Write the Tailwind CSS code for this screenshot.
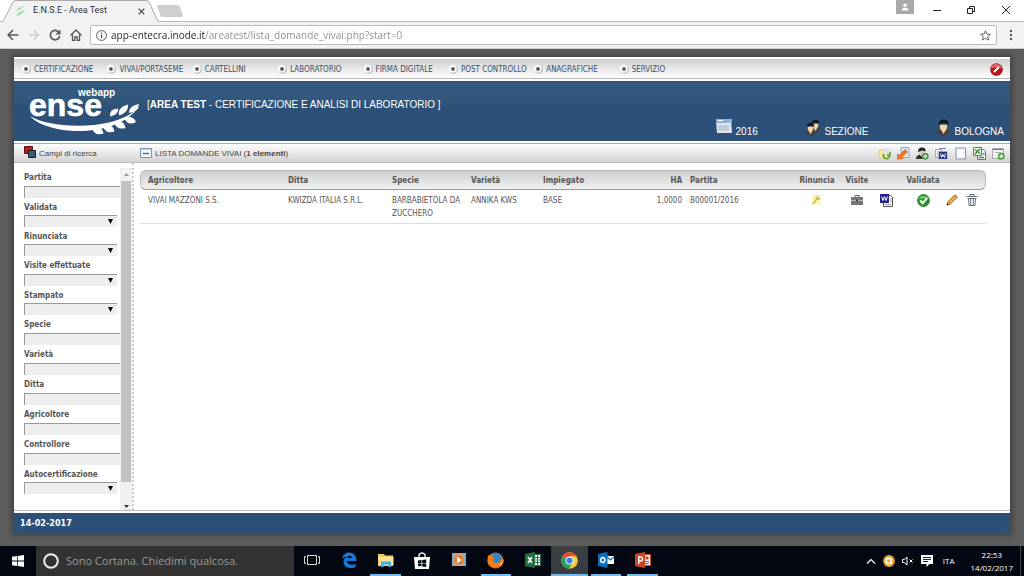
<!DOCTYPE html>
<html lang="it">
<head>
<meta charset="utf-8">
<title>E.N.S.E - Area Test</title>
<script src="https://cdn.jsdelivr.net/npm/@tailwindcss/browser@4"></script>
</head>
<body class="flex h-screen flex-col overflow-hidden bg-[#5c5c5c] font-['DejaVu_Sans_Condensed','DejaVu_Sans',sans-serif] text-[8px] text-[#555]">

<!-- Shared symbols -->
<svg class="hidden" aria-hidden="true">
  <symbol id="word" viewBox="0 0 13 13"><path d="M3.500 1.500h7l2 2v9h-9z" fill="#fff" stroke="#555"/><path d="M10 5h2M10 7h2M5 10.500h6" stroke="#99a"/><path d="M0 0h9v9H0z" fill="#23238c"/><path d="M1.500 2.500l1.500 4 1.500-4 1.500 4 1.500-4" fill="none" stroke="#fff"/></symbol>
  <symbol id="man" viewBox="0 0 15 18"><path d="M1 15c0-4 3-5 6.500-5s6.500 1 6.500 5c-2 3.500-11 3.500-13 0z" fill="#45413e"/><path d="M5 11l2.500 5 2.500-5z" fill="#ddd8cc"/><path d="M3.500 6Q3.500 13 7.500 13t4-7z" fill="#f3d3aa"/><path d="M2.500 7C2 2 5 .5 8 .5S13 2 12.500 7L11 5Q7 3 4 5.500z" fill="#17181a"/></symbol>
  <symbol id="bullet" viewBox="0 0 12 12"><circle cx="6.500" cy="6.500" r="5.200" fill="#b5b5b5"/><circle cx="5.700" cy="5.700" r="4.900" fill="#fafafa"/><rect x="4" y="4" width="4" height="4" rx="1" fill="#555"/></symbol>
</svg>

<!-- Browser tabs -->
<header class="flex h-[22px] shrink-0 items-end justify-between border-b border-[#b8b8b8] bg-white">
  <div class="flex items-end">
    <div class="relative -mb-px h-[22px] w-[158px]">
      <svg class="absolute inset-0 h-full w-full" viewBox="0 0 158 22" preserveAspectRatio="none" aria-hidden="true"><path d="M3 22L13 2Q14 .5 16 .5H146Q148 .5 149 2L158 22z" fill="#f2f2f2"/><path d="M3 21.500L13 2Q14 .5 16 .5H146Q148 .5 149 2L158 21.500" fill="none" stroke="#aaa"/></svg>
      <div class="relative flex h-full items-center pr-3 pl-4">
        <svg class="h-3 w-2.5" viewBox="0 0 10 12" aria-hidden="true"><path d="M0 6Q2 2 8 1Q5 5 0 6M0 11Q3 6 9 5Q6 10 0 11" fill="#a5dcae"/></svg>
        <span class="ml-[7px] flex-1 font-['Roboto','Open_Sans',sans-serif] text-[9px] text-[#333]">E.N.S.E - Area Test</span>
        <button aria-label="Chiudi scheda" class="p-px"><svg class="h-[7px] w-[7px]" viewBox="0 0 7 7"><path d="M.7.7l5.600 5.600M6.300.7L.7 6.300" stroke="#444" stroke-width="1.200"/></svg></button>
      </div>
    </div>
    <button aria-label="Nuova scheda" class="mb-1 -ml-px"><svg class="h-3 w-[26px]" viewBox="0 0 26 12"><path d="M0 1Q0 0 1 0H20Q22 0 22.500 1L26 10Q26 12 24 12H6Q4 12 3.500 11z" fill="#cfcfcf"/></svg></button>
  </div>
  <div class="flex h-full items-start">
    <button aria-label="Profilo" class="grid h-3.5 w-[18px] place-items-center bg-[#a9a9a9]"><svg class="h-2 w-2" viewBox="0 0 8 8" fill="#fff"><circle cx="4" cy="2.300" r="1.800"/><path d="M.5 7.500Q.5 4.800 4 4.800T7.500 7.500z"/></svg></button>
    <button aria-label="Riduci" class="grid h-5 w-[45px] place-items-center"><svg class="h-2 w-2" viewBox="0 0 8 8"><path d="M0 4.500h8" stroke="#222"/></svg></button>
    <button aria-label="Ripristina" class="grid h-5 w-6 place-items-center"><svg class="h-2 w-2" viewBox="0 0 8 8" fill="none" stroke="#222"><path d="M.5 2.500h5v5h-5zM2.500 2V.5h5v5H6"/></svg></button>
    <button aria-label="Chiudi" class="grid h-5 w-[41px] place-items-center pl-1"><svg class="h-2 w-2" viewBox="0 0 8 8"><path d="M0 0l8 8M8 0L0 8" stroke="#222"/></svg></button>
  </div>
</header>

<!-- Address bar -->
<div class="flex h-[27px] shrink-0 items-center border-b border-[#ccc] bg-[#f2f2f2] px-[7px]">
  <div class="flex gap-2">
    <button aria-label="Indietro"><svg class="h-3 w-3" viewBox="0 0 12 12" fill="none" stroke="#555" stroke-width="1.500"><path d="M11.500 6H1M6 1L1 6l5 5"/></svg></button>
    <button aria-label="Avanti"><svg class="ml-px h-3 w-3" viewBox="0 0 12 12" fill="none" stroke="#ccc" stroke-width="1.300"><path d="M1 6h9.500M6 1.500L10.500 6 6 10.500"/></svg></button>
    <button aria-label="Ricarica"><svg class="ml-px h-3 w-3" viewBox="0 0 12 12"><path d="M10 3.500A4.700 4.700 0 1 0 10.700 7" fill="none" stroke="#555" stroke-width="1.600"/><path d="M11.500.5v5h-5z" fill="#555"/></svg></button>
    <button aria-label="Pagina iniziale"><svg class="ml-px h-3 w-3" viewBox="0 0 12 12" fill="none" stroke="#555" stroke-width="1.300"><path d="M.5 6.500L6 1l5.500 5.500M2.500 5.500v6h2.300v-3.500h2.400v3.500h2.300v-6"/></svg></button>
  </div>
  <div class="ml-2 flex h-5 flex-1 items-center rounded-xs border border-[#bbb] bg-white px-[5px]">
    <svg class="h-[11px] w-[11px]" viewBox="0 0 11 11" aria-hidden="true"><circle cx="5.500" cy="5.500" r="4.900" fill="none" stroke="#555"/><path d="M5.500 4.700v3.500M5.500 2.500v1.300" stroke="#444" stroke-width="1.200"/></svg>
    <input aria-label="Indirizzo" value="app-entecra.inode.it/areatest/lista_domande_vivai.php?start=0" class="ml-1 min-w-0 flex-1 bg-[linear-gradient(to_right,#222_94px,#8a8a8a_94px)] bg-clip-text font-['Open_Sans',sans-serif] text-[10px] leading-[14px] text-transparent outline-none">
    <button aria-label="Preferiti"><svg class="h-[11px] w-[11px]" viewBox="0 0 12 12"><path d="M6 .8l1.500 3.600 3.900.3-3 2.500 1 3.800L6 8.900 2.600 11l1-3.800-3-2.500 3.900-.3z" fill="none" stroke="#555"/></svg></button>
  </div>
  <button aria-label="Menu" class="ml-3 w-2"><svg class="h-3 w-1" viewBox="0 0 4 12" fill="#555"><circle cx="2" cy="2" r="1.200"/><circle cx="2" cy="6" r="1.200"/><circle cx="2" cy="10" r="1.200"/></svg></button>
</div>

<!-- Web application -->
<div class="flex min-h-0 flex-1 flex-col px-3.5 pt-2 pb-[13px]">
<div class="flex min-h-0 flex-1 flex-col bg-white shadow-[0_0_5px_2px_#404040]">
  <nav class="mt-0.5 flex h-5 shrink-0 items-center justify-between border-b border-[#b5b5b5] bg-linear-to-b from-[#cfcfcf] to-white px-[7px] pt-px">
    <ul class="grid w-[683px] grid-cols-8 text-[#3d4f68]">
      <li><a href="#" class="flex items-center gap-[3px] whitespace-nowrap"><svg class="h-2.5 w-2.5"><use href="#bullet"/></svg><span class="pt-0.5">CERTIFICAZIONE</span></a></li>
      <li><a href="#" class="flex items-center gap-[3px] whitespace-nowrap"><svg class="h-2.5 w-2.5"><use href="#bullet"/></svg><span class="pt-0.5">VIVAI/PORTASEME</span></a></li>
      <li><a href="#" class="flex items-center gap-[3px] whitespace-nowrap"><svg class="h-2.5 w-2.5"><use href="#bullet"/></svg><span class="pt-0.5">CARTELLINI</span></a></li>
      <li><a href="#" class="flex items-center gap-[3px] whitespace-nowrap"><svg class="h-2.5 w-2.5"><use href="#bullet"/></svg><span class="pt-0.5">LABORATORIO</span></a></li>
      <li><a href="#" class="flex items-center gap-[3px] whitespace-nowrap"><svg class="h-2.5 w-2.5"><use href="#bullet"/></svg><span class="pt-0.5">FIRMA DIGITALE</span></a></li>
      <li><a href="#" class="flex items-center gap-[3px] whitespace-nowrap"><svg class="h-2.5 w-2.5"><use href="#bullet"/></svg><span class="pt-0.5">POST CONTROLLO</span></a></li>
      <li><a href="#" class="flex items-center gap-[3px] whitespace-nowrap"><svg class="h-2.5 w-2.5"><use href="#bullet"/></svg><span class="pt-0.5">ANAGRAFICHE</span></a></li>
      <li><a href="#" class="flex items-center gap-[3px] whitespace-nowrap"><svg class="h-2.5 w-2.5"><use href="#bullet"/></svg><span class="pt-0.5">SERVIZIO</span></a></li>
    </ul>
    <button aria-label="Esci"><svg class="h-[13px] w-[13px]" viewBox="0 0 13 13"><circle cx="6.500" cy="6.500" r="6.300" fill="#b81219"/><path d="M1 5.500a5.600 5.600 0 0 1 11 0Q6.500 3 1 5.500" fill="#e06a6c"/><path d="M4 9l5-5" stroke="#fff" stroke-width="2.200"/></svg></button>
  </nav>

  <div class="mt-0.5 flex h-[60px] shrink-0 justify-between bg-linear-to-b from-[#33587e] from-30% to-[#2c5077] to-45% pr-1.5 pl-3.5 font-['Liberation_Sans',sans-serif] text-[10px] text-white">
    <div class="flex">
      <svg class="mt-1 h-[52px] w-28" viewBox="0 0 112 52" fill="#fff" role="img" aria-label="ense webapp">
        <text x="50" y="11" font-size="10" font-weight="700">webapp</text>
        <text x="1" y="31" font-size="32" font-weight="700" stroke="#fff" stroke-width=".6">ense</text>
        <path d="M2 31C20 43 82 47 108 25C86 53 20 51 2 31z"/>
        <path d="M82 31.500q-1-7.500 8-8q1 6-8 8M91 30.500q-2-8 9-11q1 8-9 11M101 28q0-7.500 10-9q0 8-10 9"/>
        <path d="M64 43q10-3 11.500 5.500q-9 3-11.500-5.500M75 41q10-3 11.500 5.500q-9 3-11.500-5.500M86 37q10-3 11.500 6q-9 2.500-11.500-6M96 33q9-3 12 4q-8 4.500-12-4"/>
      </svg>
      <h1 class="mt-[18px] ml-[7px] leading-3">[<b>AREA TEST</b> - CERTIFICAZIONE E ANALISI DI LABORATORIO ]</h1>
    </div>
    <ul class="flex items-end pb-[3px]">
      <li><a href="#" class="flex w-[89px] items-end gap-1 leading-3"><svg class="mb-1 h-[15px] w-4" viewBox="0 0 16 15"><path d="M0 1h15l1 13H1z" fill="#dce4ec"/><path d="M0 0h16v4H0z" fill="#8fb4d6"/><path d="M2 1.500h5" stroke="#fff"/><path d="M2 6h11v6H2z" fill="#c5ced8"/></svg>2016</a></li>
      <li><a href="#" class="flex w-[131px] items-end gap-1 leading-3"><svg class="mb-0.5 h-[17px] w-4" viewBox="0 0 16 17"><use href="#man" x="5" y="0" width="11" height="14"/><use href="#man" x="0" y="3" width="11" height="14"/></svg>SEZIONE</a></li>
      <li><a href="#" class="flex items-end gap-1 leading-3"><svg class="mb-0.5 h-[17px] w-[15px]"><use href="#man"/></svg>BOLOGNA</a></li>
    </ul>
  </div>

  <div class="mt-0.5 flex h-5 shrink-0 items-center border-y border-t-[#aaa] border-b-[#bbb] bg-linear-to-b from-white to-[#d2d2d2] pr-[5px] pl-2.5 text-[#444]">
    <div class="flex w-[116px] items-center gap-[3px]">
      <svg class="mb-0.5 h-3 w-3" viewBox="0 0 12 12" aria-hidden="true"><path d="M.5.5h8v7h-8z" fill="#b81922" stroke="#611"/><path d="M4.500 4.500h7v7h-7z" fill="#3c5a80" stroke="#122"/></svg>
      <h2 class="pt-0.5 font-['Liberation_Sans',sans-serif] leading-3">Campi di ricerca</h2>
    </div>
    <div class="flex flex-1 items-center gap-[3px]">
      <svg class="h-3 w-3" viewBox="0 0 12 12" aria-hidden="true"><path d="M.5 1.500h11v9H.5z" fill="#f4f9fc" stroke="#7896b0"/><path d="M1 2.500h10" stroke="#b9d2e4"/><path d="M3 6.500h6" stroke="#456f95" stroke-width="1.400"/></svg>
      <h2 class="pt-0.5 font-['Liberation_Sans',sans-serif] leading-3">LISTA DOMANDE VIVAI (<b>1 elementi</b>)</h2>
    </div>
    <div class="flex gap-[6px]">
      <button aria-label="Aggiorna cartella"><svg class="h-[13px] w-[13px]" viewBox="0 0 13 13"><path d="M1 3h4l1 1h3v7H1z" fill="#fae9a5" stroke="#e3cd85"/><path d="M5 2l4-1 3 2v3H6z" fill="#d8e5f0"/><path d="M6 7a3 3 0 1 0 5 0M12 5v3H9" fill="none" stroke="#5c9d2c" stroke-width="1.600"/></svg></button>
      <button aria-label="Importa"><svg class="h-[13px] w-[13px]" viewBox="0 0 13 13"><path d="M4 .5h8v10H4z" fill="#d7e5f2" stroke="#93aac2"/><path d="M0 6l2 2 6-6 3 3-6 5 2 2-7 .5z" fill="#ec7420"/></svg></button>
      <button aria-label="Aggiungi utente"><svg class="h-[13px] w-[13px]" viewBox="0 0 13 13"><path d="M0 12Q0 7.500 5 7.500t5 4.500z" fill="#333"/><path d="M3 4Q3 9 5.700 9T8.500 4z" fill="#e9c9a5"/><path d="M2 5Q2 .5 6 .5t3.500 4L6 3.500z" fill="#222"/><circle cx="9.300" cy="9.300" r="3.500" fill="#56995a"/><path d="M7.500 9.300h3.600M9.300 7.500v3.600" stroke="#fff"/></svg></button>
      <button aria-label="Esporta Word"><svg class="h-[13px] w-[13px]" viewBox="0 0 13 13"><path d="M.5 2.500h6v8h-6zM3 4.500h9v7H3z" fill="#eef2f8" stroke="#9dabc0"/><path d="M4 1.500h7" stroke="#789"/><path d="M4 5h8v7H4z" fill="#23357f"/><path d="M5.500 6.500l1 4 1.500-3 1.500 3 1-4" fill="none" stroke="#fff"/></svg></button>
      <button aria-label="Documento"><svg class="h-[13px] w-[13px]" viewBox="0 0 13 13"><path d="M2 1h9.500v11H2z" fill="#eef4fb" stroke="#8295aa"/><path d="M3.500 2.500h6v7h-6z" fill="#fff"/></svg></button>
      <button aria-label="Esporta Excel"><svg class="h-[13px] w-[13px]" viewBox="0 0 13 13"><path d="M4.500 2.500h6l2 2v8h-8z" fill="#f8fbff" stroke="#4b6fb0"/><path d="M.5.500h8v8h-8z" fill="#e6f4df" stroke="#3f9442"/><path d="M2 2.500l5 4M7 2L2 7M6 10.500h5M9.500 7h2" stroke="#3b8b3e" stroke-width="1.300"/></svg></button>
      <button aria-label="Aggiungi modulo"><svg class="h-[13px] w-[13px]" viewBox="0 0 13 13"><path d="M.5 1.500h11v10H.5z" fill="#f5f5f5" stroke="#a4aaae"/><path d="M1 2.500h10" stroke="#6d7880"/><path d="M3 5.500h6" stroke="#aaa"/><circle cx="9.300" cy="9.300" r="3.500" fill="#4fa33b"/><path d="M7.300 9.300h4M9.300 7.300v4" stroke="#fff" stroke-width="1.200"/></svg></button>
    </div>
  </div>

  <div class="flex min-h-0 flex-1 border-b border-[#bbb]">
    <aside class="flex w-[120px] shrink-0 border-r-2 border-dotted border-[#ccc] pt-[5px]">
      <form class="min-w-0 flex-1 overflow-hidden pl-2.5 font-bold">
        <div class="flex h-[30px] flex-col"><label for="f1" class="h-[18px] leading-5">Partita</label><input id="f1" class="h-3 w-[120px] border-t border-l border-[#999] bg-[#eee]"></div>
        <div class="flex h-[29px] flex-col"><label for="f2" class="h-[17px] leading-5">Validata</label><span class="relative flex h-3"><select id="f2" class="h-3 w-[93px] appearance-none border-t border-l border-[#999] bg-[#eee]"><option></option></select><svg class="pointer-events-none absolute top-1 left-[84px] h-[5px] w-[5px]" viewBox="0 0 5 5"><path d="M0 0h5L2.500 5z"/></svg></span></div>
        <div class="flex h-[29px] flex-col"><label for="f3" class="h-[17px] leading-5">Rinunciata</label><span class="relative flex h-3"><select id="f3" class="h-3 w-[93px] appearance-none border-t border-l border-[#999] bg-[#eee]"><option></option></select><svg class="pointer-events-none absolute top-1 left-[84px] h-[5px] w-[5px]" viewBox="0 0 5 5"><path d="M0 0h5L2.500 5z"/></svg></span></div>
        <div class="flex h-[30px] flex-col"><label for="f4" class="h-[18px] leading-5">Visite effettuate</label><span class="relative flex h-3"><select id="f4" class="h-3 w-[93px] appearance-none border-t border-l border-[#999] bg-[#eee]"><option></option></select><svg class="pointer-events-none absolute top-1 left-[84px] h-[5px] w-[5px]" viewBox="0 0 5 5"><path d="M0 0h5L2.500 5z"/></svg></span></div>
        <div class="flex h-[29px] flex-col"><label for="f5" class="h-[17px] leading-5">Stampato</label><span class="relative flex h-3"><select id="f5" class="h-3 w-[93px] appearance-none border-t border-l border-[#999] bg-[#eee]"><option></option></select><svg class="pointer-events-none absolute top-1 left-[84px] h-[5px] w-[5px]" viewBox="0 0 5 5"><path d="M0 0h5L2.500 5z"/></svg></span></div>
        <div class="flex h-[30px] flex-col"><label for="f6" class="h-[18px] leading-5">Specie</label><input id="f6" class="h-3 w-[120px] border-t border-l border-[#999] bg-[#eee]"></div>
        <div class="flex h-[30px] flex-col"><label for="f7" class="h-[18px] leading-5">Varietà</label><input id="f7" class="h-3 w-[120px] border-t border-l border-[#999] bg-[#eee]"></div>
        <div class="flex h-[30px] flex-col"><label for="f8" class="h-[18px] leading-5">Ditta</label><input id="f8" class="h-3 w-[120px] border-t border-l border-[#999] bg-[#eee]"></div>
        <div class="flex h-[30px] flex-col"><label for="f9" class="h-[18px] leading-5">Agricoltore</label><input id="f9" class="h-3 w-[120px] border-t border-l border-[#999] bg-[#eee]"></div>
        <div class="flex h-[30px] flex-col"><label for="f10" class="h-[18px] leading-5">Controllore</label><input id="f10" class="h-3 w-[120px] border-t border-l border-[#999] bg-[#eee]"></div>
        <div class="flex h-[29px] flex-col"><label for="f11" class="h-[17px] leading-5">Autocertificazione</label><span class="relative flex h-3"><select id="f11" class="h-3 w-[93px] appearance-none border-t border-l border-[#999] bg-[#eee]"><option></option></select><svg class="pointer-events-none absolute top-1 left-[84px] h-[5px] w-[5px]" viewBox="0 0 5 5"><path d="M0 0h5L2.500 5z"/></svg></span></div>
      </form>
      <div class="flex w-3 flex-col items-center bg-[#f1f1f1]">
        <svg class="my-[5px] h-[3px] w-[5px] shrink-0" viewBox="0 0 5 3"><path d="M0 3h5L2.500 0z" fill="#999"/></svg>
        <div class="w-full flex-1 px-px"><div class="h-[94%] bg-[#c1c1c1]"></div></div>
        <svg class="mt-1 mb-0.5 h-[3px] w-[5px] shrink-0" viewBox="0 0 5 3"><path d="M0 0h5L2.500 3z" fill="#333"/></svg>
      </div>
    </aside>

    <main class="min-w-0 flex-1 pt-[7px] pr-6 pl-1.5">
      <table class="w-full table-fixed border-separate border-spacing-0 text-left leading-[13px] [&_td]:border-b [&_td]:border-[#ddd] [&_td]:pt-1 [&_td]:pb-[3px] [&_td]:align-top [&_th]:h-5 [&_th]:border-y [&_th]:border-t-[#bbb] [&_th]:border-b-[#999] [&_th]:bg-linear-to-b [&_th]:from-[#cfcfcf] [&_th]:to-[#f0f0f0] [&_th]:p-0">
        <colgroup><col class="w-[140px]"><col class="w-[104px]"><col class="w-[79px]"><col class="w-[72px]"><col class="w-[107px]"><col class="w-[40px]"><col class="w-[115px]"><col class="w-[40px]"><col class="w-[40px]"><col class="w-[26px]"><col class="w-[40px]"><col class="w-[43px]"></colgroup>
        <thead>
          <tr>
            <th class="rounded-l-md border-l border-l-[#bbb]"><span class="pl-[7px]">Agricoltore</span></th>
            <th><span class="pl-2">Ditta</span></th>
            <th><span class="pl-2">Specie</span></th>
            <th><span class="pl-2">Varietà</span></th>
            <th><span class="pl-2">Impiegato</span></th>
            <th class="text-right">HA</th>
            <th><span class="pl-2">Partita</span></th>
            <th class="text-center">Rinuncia</th>
            <th class="text-center">Visite</th>
            <th></th>
            <th class="text-center">Validata</th>
            <th class="rounded-r-md border-r border-r-[#bbb]"></th>
          </tr>
        </thead>
        <tbody>
          <tr>
            <td class="pl-2">VIVAI MAZZONI S.S.</td>
            <td class="pl-2">KWIZDA ITALIA S.R.L.</td>
            <td class="pl-2">BARBABIETOLA DA ZUCCHERO</td>
            <td class="pl-2">ANNIKA KWS</td>
            <td class="pl-2">BASE</td>
            <td class="text-right">1,0000</td>
            <td class="pl-2">B00001/2016</td>
            <td><button aria-label="Rinuncia" class="mx-auto block"><svg class="h-3 w-3" viewBox="0 0 12 12"><path d="M1 1h10v10H1z" fill="#fbf8c4"/><path d="M4 1h5L4 10H1z" fill="#efe98c"/><path d="M2 10l5-6M5 4h3v2" fill="none" stroke="#a39a78"/></svg></button></td>
            <td><button aria-label="Visite" class="mx-auto block"><svg class="h-3 w-3" viewBox="0 0 12 12"><path d="M4 3V1.500h4V3" fill="none" stroke="#555"/><path d="M0 3h12v8H0z" fill="#777"/><path d="M0 6.500h12" stroke="#bbb"/><path d="M5 5.500h2v2H5z" fill="#444"/></svg></button></td>
            <td class="pl-[3px]"><button aria-label="Documento Word" class="block"><svg class="h-[13px] w-[13px]"><use href="#word"/></svg></button></td>
            <td><button aria-label="Validata" class="mx-auto block"><svg class="h-[13px] w-[13px]" viewBox="0 0 13 13"><circle cx="6.500" cy="6.500" r="6.400" fill="#27902b"/><path d="M1.500 5a5.400 5.400 0 0 1 10 0Q6 4 1.500 5" fill="#72c46c"/><path d="M3.200 6.500l2.500 2.700 4.300-5" fill="none" stroke="#fff" stroke-width="2"/></svg></button></td>
            <td class="pl-[3px]"><span class="flex gap-2"><button aria-label="Modifica"><svg class="h-3 w-3" viewBox="0 0 12 12"><path d="M1 11l1-3.500L8.500 1l2.500 2.500L4.500 10z" fill="#f0b23c" stroke="#7a5a2a" stroke-width=".8"/><path d="M8 1.500L9.500.4 11.600 2.500 10.500 4z" fill="#c67a5c"/><path d="M.6 11.400l.7-2.200 1.500 1.500z" fill="#222"/></svg></button><button aria-label="Elimina"><svg class="h-3 w-3" viewBox="0 0 12 12" fill="none" stroke="#68737c"><path d="M.5 2.500h11M4 2.500v-2h4v2M1.500 4.500h9M2.500 4.500l.5 7h6l.5-7M4.700 5v6M7.300 5v6"/></svg></button></span></td>
          </tr>
        </tbody>
      </table>
    </main>
  </div>
  <footer class="mt-0.5 flex h-5 shrink-0 items-center bg-[#2c5077] pt-0.5 pl-1.5 text-[9px] font-bold text-white">14-02-2017</footer>
</div>
</div>

<!-- Taskbar -->
<footer class="flex h-[30px] shrink-0 items-center justify-between bg-[#020711] font-['Open_Sans',sans-serif] text-white">
  <div class="flex h-full items-center">
    <button aria-label="Start" class="grid h-full w-9 place-items-center"><svg class="h-3 w-3" viewBox="0 0 12 12" fill="#fff"><path d="M0 1.700l5.300-.7v4.600H0zM6 .9L12 0v5.600H6zM0 6.400h5.300V11L0 10.300zM6 6.400h6V12l-6-.9z"/></svg></button>
    <label class="flex h-full w-[258px] items-center gap-[7px] bg-[#333] pl-[7px]"><svg class="h-4 w-4 shrink-0" viewBox="0 0 16 16"><circle cx="8" cy="8" r="6.800" fill="none" stroke="#eee" stroke-width="2"/></svg><input aria-label="Cerca" placeholder="Sono Cortana. Chiedimi qualcosa." class="min-w-0 flex-1 text-[11px] placeholder:text-[#999]"></label>
    <div class="grid h-full w-[367px] grid-cols-10 [&>button]:grid [&>button]:place-items-center [&>button]:border-b-2 [&>button]:bg-clip-padding">
      <button aria-label="Visualizzazione attività" class="border-transparent"><svg class="h-3 w-4" viewBox="0 0 16 12" fill="none" stroke="#ddd"><path d="M3.500 1.500h9v9h-9zM2 2.500H.5v7H2M14 2.500h1.500v7H14"/></svg></button>
      <button aria-label="Edge" class="border-transparent"><svg class="h-4 w-4" viewBox="0 0 16 16"><path d="M1 7C2 2 5 .5 8.500.5 13 .5 15.500 4 15.500 9H5.800c.2 4 5.500 4.600 8.700 2.500V15C9 17.500 2.500 15.500 2.500 10c0-2.500 1.500-4.300 3.500-5.200C4 5 2 5.500 1 7zm5-1h5C11 3 6.500 2.700 6 6z" fill="#1479d4"/></svg></button>
      <button aria-label="Esplora file" class="mx-[3px] border-[#76b9ed]"><svg class="h-4 w-4" viewBox="0 0 16 16"><path d="M0 2h6l1 1.500h8V14H0z" fill="#f2cf65"/><path d="M1 5h14.500v8H1z" fill="#fae59a"/><path d="M3 15V9.500h10V15h-2.500v-2.500h-5V15z" fill="#42b2dd"/></svg></button>
      <button aria-label="Store" class="border-transparent"><svg class="h-[17px] w-4" viewBox="0 0 16 17"><path d="M5 5V2.500Q8-.5 11 2.500V5" fill="none" stroke="#fff" stroke-width="1.300"/><path d="M0 5h16l-1 12H1z" fill="#fff"/><path d="M4 8.500l3.500-.4v2.800H4zM8.200 8l4-.5v3.400h-4zM4 11.500h3.500v2.800L4 14zM8.200 11.500h4V15l-4-.5z" fill="#020711"/></svg></button>
      <button aria-label="Video" class="border-transparent"><svg class="h-3.5 w-3.5" viewBox="0 0 14 14"><path d="M0 0h14v13H0z" fill="#84aac6"/><path d="M2 1h9v12H2z" fill="#c9a183"/><circle cx="6.800" cy="7" r="4.500" fill="#e97a28"/><path d="M5 3.800L10 7l-5 3.200z" fill="#fff"/></svg></button>
      <button aria-label="Firefox" class="mx-[3px] border-[#76b9ed]"><svg class="h-[17px] w-[17px]" viewBox="0 0 17 17"><circle cx="8.500" cy="8.500" r="8" fill="#e0611a"/><circle cx="9" cy="6.500" r="5.700" fill="#2f86c9"/><path d="M1 3l2 1q2-1.500 3-1L5.500 5 8 6.500 6 8q0 3 4 3 3-.5 4-4l1 3q-2 5-7 5.500Q0 15 .5 8z" fill="#ef7d19"/><path d="M15 4q2.500 6-3.500 10 5-.5 5-6z" fill="#ffd140"/></svg></button>
      <button aria-label="Excel" class="border-transparent"><svg class="h-4 w-4" viewBox="0 0 16 16"><path d="M9 2.500h6.500v11H9z" fill="#fff" stroke="#1f7244"/><path d="M9 5.500h6M9 8h6M9 10.500h6M12.500 3v10" stroke="#1f7244"/><path d="M0 2l10-2v16L0 14z" fill="#1f7244"/><path d="M3 5l4 6M7 5l-4 6" stroke="#fff" stroke-width="1.400"/></svg></button>
      <button aria-label="Chrome" class="border-[#76b9ed] bg-[#3a3d42]"><svg class="h-[17px] w-[17px]" viewBox="0 0 17 17"><circle cx="8.500" cy="8.500" r="8.300" fill="#f9cf3c"/><path d="M8.500 8.500L1.300 4.300A8.300 8.300 0 0 1 15.700 4.300H8.500z" fill="#df4b3c"/><path d="M1.300 4.300A8.300 8.300 0 0 0 8 16.800l3.900-6.500-3.400-1.800z" fill="#2e9f5a"/><circle cx="8.500" cy="8.500" r="4" fill="#fff"/><circle cx="8.500" cy="8.500" r="3.100" fill="#3d7ee8"/></svg></button>
      <button aria-label="Outlook" class="mx-[3px] border-[#76b9ed]"><svg class="h-4 w-4" viewBox="0 0 16 16"><path d="M8 4h8v8H8z" fill="#fff"/><path d="M9 5l3.500 3L16 5" fill="none" stroke="#0c6fc0" stroke-width="1.300"/><path d="M0 2l9.500-2v16L0 14z" fill="#0c6fc0"/><ellipse cx="4.800" cy="8" rx="2" ry="2.500" fill="none" stroke="#fff" stroke-width="1.400"/></svg></button>
      <button aria-label="PowerPoint" class="mx-[3px] border-[#76b9ed]"><svg class="h-4 w-4" viewBox="0 0 16 16"><path d="M8 2.500h7.500v11H8z" fill="#fff" stroke="#d04423"/><path d="M10 9.500h4M10 11.500h4" stroke="#d04423"/><circle cx="12" cy="6" r="1.800" fill="#d04423"/><path d="M0 2l10-2v16L0 14z" fill="#d04423"/><path d="M3.700 12V5h1.800q2 0 2 2t-2 2H3.700" fill="none" stroke="#fff" stroke-width="1.400"/></svg></button>
    </div>
  </div>
  <div class="flex h-full items-center text-[8px]">
    <button aria-label="Mostra icone nascoste"><svg class="h-2 w-2.5" viewBox="0 0 10 8"><path d="M1 6.500l4-4 4 4" fill="none" stroke="#fff" stroke-width="1.200"/></svg></button>
    <svg class="ml-[7px] h-3 w-3" viewBox="0 0 12 12" role="img" aria-label="Antivirus"><circle cx="6" cy="6" r="5.900" fill="#f3a42c"/><circle cx="5.800" cy="6" r="2.600" fill="none" stroke="#fff" stroke-width="1.600"/><path d="M8.300 4v5" stroke="#fff" stroke-width="1.400"/></svg>
    <svg class="ml-[7px] h-2.5 w-3" viewBox="0 0 12 10" fill="none" stroke="#fff" role="img" aria-label="Volume disattivato"><path d="M.5 3.500h1.700L5 1v8L2.200 6.500H.5zM7.500 3.500l3 3M10.500 3.500l-3 3"/></svg>
    <svg class="ml-[7px] h-3 w-3" viewBox="0 0 12 12" role="img" aria-label="Notifiche"><path d="M0 0h12v9H8.500L5.500 12V9H0z" fill="#fff"/><path d="M2 2.500h8M2 4.500h8M2 6.500h5" stroke="#222"/></svg>
    <span class="ml-2.5">ITA</span>
    <time class="ml-4 text-center leading-[13px]">22:53<br>14/02/2017</time>
    <span class="ml-[7px] mr-[3px] h-full w-px bg-[#444]"></span>
  </div>
</footer>
</body>
</html>
